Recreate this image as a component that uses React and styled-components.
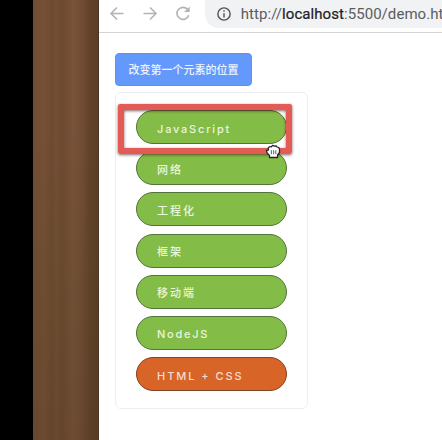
import React from "react";
import styled, { createGlobalStyle } from "styled-components";

const GlobalStyle = createGlobalStyle`
  * { box-sizing: border-box; }
  body { margin: 0; overflow: hidden; background: #000; }
`;

const Desktop = styled.div`
  display: flex;
  width: 442px;
  height: 440px;
  overflow: hidden;
  background: #000;
  font-family: Inter, "Noto Sans CJK SC", sans-serif;
`;

const Bezel = styled.div`
  flex: 0 0 33px;
  background: #000;
`;

const Wood = styled.div`
  flex: 0 0 66px;
  border-right: 1px solid #4b3424;
  background:
    linear-gradient(180deg, transparent 30%, rgba(70, 66, 30, 0.16) 65%, rgba(65, 50, 25, 0.2) 100%),
    linear-gradient(90deg, #724c32 0%, #745036 17%, #6d4a30 29%, #724e35 36%, #6d4931 44%, #785239 62%, #704c34 76%, #62422a 87%, #5d3e28 100%);
`;

const Browser = styled.div`
  flex: 1;
  min-width: 0;
  display: flex;
  flex-direction: column;
  background: #fff;
`;

const Toolbar = styled.header`
  flex: 0 0 33px;
  display: flex;
  border-bottom: 1px solid #d3d3d4;
`;

const NavIcons = styled.svg`
  flex: 0 0 106px;
  width: 106px;
  height: 28px;
  fill: none;
  stroke: #b3b3b4;
  stroke-width: 1.6;
`;

const AddressBar = styled.div`
  flex: 0 0 260px;
  display: flex;
  align-items: center;
  gap: 9.5px;
  height: 28px;
  padding-left: 12.3px;
  border-radius: 0 0 0 14px;
  background: #f1f2f4;
`;

const InfoIcon = styled.svg`
  flex: 0 0 14px;
  width: 14px;
  height: 14px;
  fill: none;
  stroke: #505154;
  stroke-width: 1.3;
`;

const Url = styled.span`
  font: 15px/20px Roboto, sans-serif;
  letter-spacing: 0.06px;
  color: #5b5c60;
  white-space: nowrap;
`;

const Host = styled.span`
  color: #1c1d1f;
  -webkit-text-stroke: 0.2px #1c1d1f;
`;

const Page = styled.main`
  display: flex;
  flex-direction: column;
  align-items: flex-start;
  gap: 6px;
  padding: 20px 16px;
`;

const MoveButton = styled.button`
  width: 137px;
  height: 33px;
  padding: 0 0 2px;
  border: 1px solid #5c93f4;
  border-radius: 4px;
  background: #6499fc;
  color: #edf4ff;
  font: 500 11px/16px "Noto Sans CJK SC", sans-serif;
`;

const Panel = styled.section`
  position: relative;
  width: 193.4px;
  height: 317px;
  padding: 17px 20px;
  border: 1px solid #eeeff0;
  border-radius: 6px;
`;

const List = styled.ul`
  display: flex;
  flex-direction: column;
  gap: 7.2px;
  margin: 0;
  padding: 0;
  list-style: none;
`;

const Item = styled.li`
  display: flex;
  align-items: center;
  width: 151.4px;
  height: 34px;
  padding: 3px 0 0 20px;
  border: 1px solid ${({ $active }) => ($active ? "#824324" : "#52733a")};
  border-radius: 17px;
  background: ${({ $active }) => ($active ? "#d86428" : "#83bd48")};
  color: ${({ $active }) => ($active ? "#f5ddd0" : "#eaf5de")};
  font-size: 11px;
  font-weight: 500;
  line-height: 16px;
  letter-spacing: ${({ $spacing }) => $spacing}px;
  white-space: pre;
`;

const Highlight = styled.div`
  position: absolute;
  left: 2px;
  top: 11px;
  width: 174px;
  height: 50px;
  border: 6px solid #e25b54;
  border-radius: 2px;
  box-shadow: 0 1px 3px rgba(70, 20, 18, 0.65), inset 0 1px 3px rgba(70, 20, 18, 0.65);
`;

const Cursor = styled.svg`
  position: absolute;
  left: 148.5px;
  top: 51px;
  width: 16px;
  height: 15px;
`;

const items = [
  { label: "JavaScript", spacing: 1.8 },
  { label: "网络", spacing: 2 },
  { label: "工程化", spacing: 2 },
  { label: "框架", spacing: 2 },
  { label: "移动端", spacing: 2 },
  { label: "NodeJS", spacing: 1.75 },
  { label: "HTML + CSS", spacing: 1.95, active: true },
];

export default function App() {
  return (
    <>
      <GlobalStyle />
      <Desktop>
        <Bezel />
        <Wood />
        <Browser>
          <Toolbar>
            <NavIcons viewBox="0 0 106 28">
              <path d="M24.5 13.5H12.5M18 7.5l-6 6 6 6" />
              <path d="M44.5 13.5h12M51 7.5l6 6-6 6" />
              <path d="M88.6 9.5A6 6 0 1 0 89.7 15.2" />
              <path d="M90.7 6.5v5.6h-5.6z" fill="#b3b3b4" stroke="none" />
            </NavIcons>
            <AddressBar>
              <InfoIcon viewBox="0 0 13 13">
                <circle cx="6.5" cy="6.5" r="5.7" />
                <path d="M6.5 5.7v4M6.5 3.1v1.4" />
              </InfoIcon>
              <Url>http://<Host>localhost</Host>:5500/demo.ht</Url>
            </AddressBar>
          </Toolbar>
          <Page>
            <MoveButton>改变第一个元素的位置</MoveButton>
            <Panel>
              <List>
                {items.map(({ label, spacing, active }) => (
                  <Item key={label} $spacing={spacing} $active={active}>
                    {label}
                  </Item>
                ))}
              </List>
              <Highlight />
              <Cursor viewBox="0 0 16 15">
                <path
                  d="M4.5 13.5V11.4L2 9 1.5 6.2l2-.2-.2-2.3 1.8-1.2 1.2.4L7.6 1.4l1.8.8 1.7-.4 1 1.2 1.7.5.7 2v3L12.6 11v2.5z"
                  fill="#fff"
                  stroke="#252525"
                  strokeWidth="1.3"
                  strokeLinejoin="round"
                />
                <path d="M6.4 6.2v4M8.6 6.2v4M10.8 6.2v4" stroke="#777" strokeWidth="1.2" />
              </Cursor>
            </Panel>
          </Page>
        </Browser>
      </Desktop>
    </>
  );
}
